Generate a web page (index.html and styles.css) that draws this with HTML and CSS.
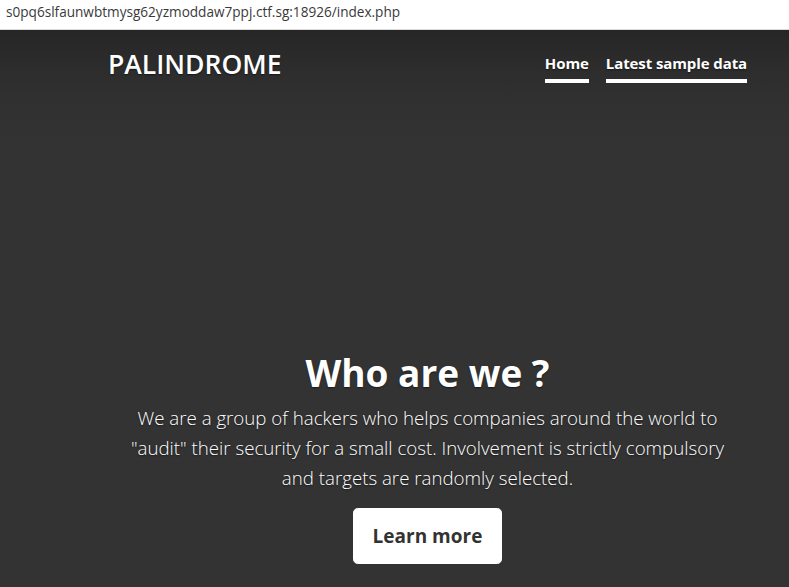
FILE: index.html
```html
<!DOCTYPE html>
<html lang="en">
<head>
<meta charset="utf-8">
<title>Palindrome</title>
<link rel="stylesheet" href="styles.css">
</head>
<body>
<div class="urlbar"><span class="url">s0pq6slfaunwbtmysg62yzmoddaw7ppj.ctf.sg:18926/index.php</span></div>
<div class="page">
  <div class="cover">
    <header class="masthead">
      <h3 class="brand">PALINDROME</h3>
      <nav class="nav">
        <a class="nav-link" href="#">Home</a>
        <a class="nav-link" href="#">Latest sample data</a>
      </nav>
    </header>
    <main class="hero">
      <h1 class="hero-title">Who are we ?</h1>
      <p class="lead">We are a group of hackers who helps companies around the world to "audit" their security for a small cost. Involvement is strictly compulsory and targets are randomly selected.</p>
      <p class="lead"><a class="btn" href="#">Learn more</a></p>
    </main>
  </div>
</div>
</body>
</html>
```

FILE: styles.css
```css
html, body {
  margin: 0;
  padding: 0;
  height: 100%;
}
body {
  font-family: "Open Sans", "Noto Sans", sans-serif;
  background: #333;
  color: #fff;
  overflow: hidden;
}
.urlbar {
  height: 30px;
  background: #fff;
  border-bottom: 1px solid #d9d9d9;
  box-sizing: border-box;
  display: flex;
  align-items: center;
  padding-left: 6px;
}
.url {
  font-size: 13.6px;
  color: #3a3a3a;
  position: relative;
  top: -3px;
}
.page {
  background: linear-gradient(#262626 0px, #2d2d2d 40px, #313131 80px, #333 120px);
  height: calc(100% - 30px);
  text-shadow: 0 0.05rem 0.1rem rgba(0,0,0,.5);
}
.cover {
  padding: 18px 42px 16px 108px;
}
.masthead {
  display: flex;
  justify-content: space-between;
  align-items: flex-start;
}
.brand {
  margin: 0;
  font-size: 26.5px;
  font-weight: 600;
  line-height: 1.2;
  padding-top: 1px;
}
.nav {
  display: flex;
  gap: 17px;
}
.nav-link {
  color: #fff;
  text-decoration: none;
  font-weight: 700;
  font-size: 15px;
  line-height: 24px;
  padding: 3px 0 4px;
  border-bottom: 4px solid #fff;
  letter-spacing: -0.1px;
}
.hero {
  margin-top: 266px;
  text-align: center;
}
.hero-title {
  margin: 0 0 6px;
  font-size: 37px;
  font-weight: 700;
  line-height: 48px;
}
.lead {
  margin: 0 0 15px;
  font-size: 18.7px;
  font-weight: 300;
  line-height: 30px;
  padding: 0 14px;
}
.btn {
  display: inline-block;
  white-space: nowrap;
  background: #fff;
  color: #333;
  text-shadow: none;
  text-decoration: none;
  font-weight: 700;
  font-size: 19px;
  line-height: 30px;
  padding: 12px 19px;
  border: 1px solid #fff;
  border-radius: 4.8px;
}
```
